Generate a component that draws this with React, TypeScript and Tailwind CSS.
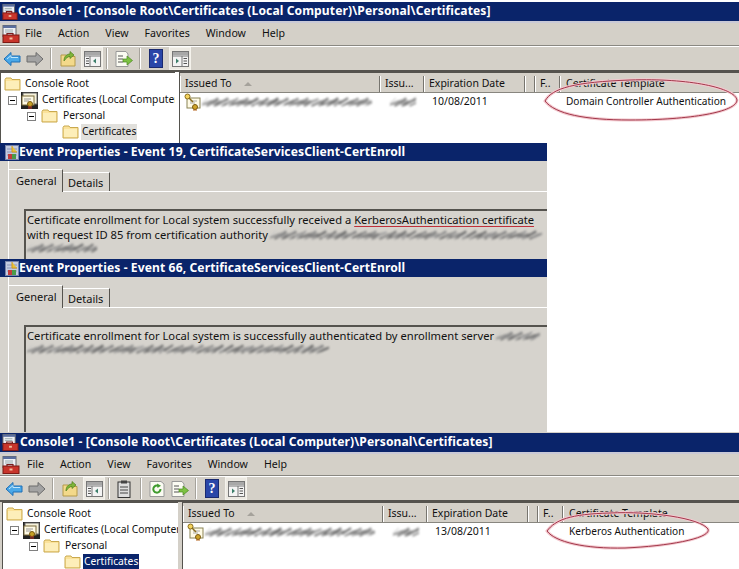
import React from 'react';

const FONT = "font-['Noto_Sans',sans-serif]";

const Folder = () => (
  <svg width="17" height="14" viewBox="0 0 17 14" className="shrink-0">
    <path d="M1 2.5 L2 1 H7 L8 2.5 H16 V13 H1 Z" fill="#fbe29a" stroke="#c9a94f" strokeWidth="1" />
    <path d="M2 4 H15 V12 H2 Z" fill="#fdeeb9" />
  </svg>
);

const CertStore = () => (
  <svg width="17" height="17" viewBox="0 0 17 17" className="shrink-0">
    <rect x="0" y="0" width="17" height="17" fill="#222" />
    <rect x="2" y="1" width="14" height="11" fill="#f7f3dc" stroke="#6b6b6b" />
    <rect x="1" y="4" width="12" height="9" fill="#fffbe6" stroke="#7a6a3a" />
    <path d="M3 7 H10 M3 9 H8" stroke="#999" />
    <circle cx="9" cy="12" r="2.5" fill="#c9a227" stroke="#7a5a10" />
    <path d="M8 14 V17 M10 14 V17" stroke="#c0392b" />
  </svg>
);

const CertRow = () => (
  <svg width="18" height="18" viewBox="0 0 18 18" className="shrink-0">
    <rect x="3" y="5" width="13" height="10" fill="#fffbe6" stroke="#8a8355" />
    <path d="M6 8 H13 M6 10 H11" stroke="#aaa" />
    <circle cx="3.5" cy="3.5" r="2.5" fill="#f4d35e" stroke="#8a6d1a" />
    <path d="M5 5 L9 9" stroke="#8a6d1a" strokeWidth="1.5" />
    <circle cx="11" cy="14" r="2.5" fill="#d0a52a" stroke="#7a5a10" />
    <path d="M10 16 V18 M12 16 V18" stroke="#b5651d" />
  </svg>
);

const MmcIcon = ({ size = 18 }: { size?: number }) => (
  <svg width={size} height={size} viewBox="0 0 18 18" className="shrink-0">
    <rect x="1" y="0.5" width="13" height="11" fill="#eef0f5" stroke="#666" />
    <rect x="1" y="0.5" width="13" height="2.5" fill="#5b6f9e" />
    <path d="M3 5 H11 M3 7 H11" stroke="#9aa" />
    <path d="M5 10 V8.5 H11 V10" fill="none" stroke="#7a1d1d" strokeWidth="1.2" />
    <rect x="1" y="10" width="16" height="7.5" fill="#c8352b" stroke="#7d1a14" />
    <rect x="7.5" y="12.5" width="3" height="2" fill="#f0c0a0" />
  </svg>
);

const SmallEventIcon = () => (
  <svg width="14" height="15" viewBox="0 0 14 15" className="shrink-0">
    <rect x="0.5" y="0.5" width="13" height="14" fill="#c4cbe0" stroke="#7682a8" />
    <path d="M2 4 H12 M2 7 H12 M2 10 H12" stroke="#8a94b8" />
    <path d="M7 1 V7 H12" fill="#e8c33c" stroke="#d19a1e" />
    <path d="M3 9 H7 V14 H3 Z" fill="#c33b3b" />
    <path d="M7 9 H11 V14 H7 Z" fill="#4a9b4a" />
  </svg>
);

const Back = () => (
  <svg width="18" height="16" viewBox="0 0 18 16">
    <path d="M1 8 L8 1.5 V5 H17 V11 H8 V14.5 Z" fill="#4aa8e8" stroke="#1f6fb5" />
    <path d="M4 8 L8 4.5 V6.5 H15" fill="none" stroke="#bfe6fb" />
  </svg>
);

const Forward = () => (
  <svg width="18" height="16" viewBox="0 0 18 16">
    <path d="M17 8 L10 1.5 V5 H1 V11 H10 V14.5 Z" fill="#a3a3a3" stroke="#6c6c6c" />
  </svg>
);

const UpFolder = () => (
  <svg width="16" height="17" viewBox="0 0 16 17">
    <path d="M1 5 H6 L7 6.5 H15 V16 H1 Z" fill="#f3d98a" stroke="#b59a4a" />
    <path d="M4 11 C4 6 7 4 10 4 V1.5 L14 5 L10 8.5 V6.5 C8 6.5 6 8 4 11 Z" fill="#7fb53a" stroke="#4f7f1d" strokeWidth="0.7" />
  </svg>
);

const PaneIcon = ({ flip = false }: { flip?: boolean }) => (
  <svg width="17" height="16" viewBox="0 0 17 16">
    <rect x="0.5" y="0.5" width="16" height="15" fill="#f4f4f4" stroke="#777" />
    <rect x="1" y="1" width="15" height="3" fill="#a8a8a8" />
    {flip ? (
      <>
        <path d="M10 5 V15 M1 5 H16" stroke="#777" />
        <path d="M4 7.5 L7 10 L4 12.5 Z" fill="#3d7f6b" />
        <path d="M11.5 7.5 H15 M11.5 10 H15 M11.5 12.5 H15" stroke="#555" />
      </>
    ) : (
      <>
        <path d="M6 5 V15 M1 5 H16" stroke="#777" />
        <path d="M2 7.5 H5 M2 10 H5 M2 12.5 H5" stroke="#555" />
        <path d="M12 7.5 L9 10 L12 12.5 Z" fill="#3d7f6b" />
      </>
    )}
  </svg>
);

const PaneButton = ({ flip = false }: { flip?: boolean }) => (
  <div className="w-[22px] h-[23px] flex items-center justify-center bg-[#ece9e2] border border-[#f4f2ec]">
    <PaneIcon flip={flip} />
  </div>
);

const ExportList = () => (
  <svg width="18" height="16" viewBox="0 0 18 16">
    <path d="M1 .5 H11 L13 3 V15.5 H1 Z" fill="#fbfbf2" stroke="#999" />
    <path d="M3 5 H8 M3 8 H8 M3 11 H8" stroke="#555" />
    <path d="M8 8 H12 V5 L17.5 9.5 L12 14 V11 H8 Z" fill="#7cc142" stroke="#4b8a1f" strokeWidth="0.7" />
  </svg>
);

const Help = () => (
  <div className="w-[14px] h-[19px] bg-[#2a46a8] border border-[#1a2a70] flex items-center justify-center text-white text-[14px] font-bold leading-none font-['Liberation_Serif',serif]">
    ?
  </div>
);

const Clipboard = () => (
  <svg width="14" height="18" viewBox="0 0 14 18">
    <rect x="1" y="2" width="12" height="15.5" fill="#ddd" stroke="#333" />
    <rect x="4" y="0.5" width="6" height="3" fill="#444" />
    <path d="M3 7 H11 M3 10 H11 M3 13 H11" stroke="#444" />
  </svg>
);

const Refresh = () => (
  <svg width="16" height="16" viewBox="0 0 16 16">
    <path d="M1 .5 H12 L15 3 V15.5 H1 Z" fill="#fbfbf2" stroke="#999" />
    <path d="M11.5 8 A3.6 3.6 0 1 1 9.5 4.8" fill="none" stroke="#3f9b2e" strokeWidth="2" />
    <path d="M8 2.5 L12 4.8 L8.5 7 Z" fill="#3f9b2e" />
  </svg>
);

const Sep = ({ className = '' }: { className?: string }) => (
  <div className={`w-[2px] h-[21px] bg-[#a5a29b] border-r border-white shrink-0 ${className}`} />
);

// the scrubbed-out server names in the screenshot
const Smudge = ({ width, height = 12, className = '' }: { width: number; height?: number; className?: string }) => {
  const strokes = Array.from({ length: Math.floor(width / 2.5) }, (_, i) => i * 2.5 + 1);
  return (
    <svg width={width} height={height} viewBox={`0 0 ${width} ${height}`} className={`blur-[1px] shrink-0 ${className}`}>
      {strokes.map((x, i) => {
        const gap = (i * 7) % 11 === 0;
        return (
          <path
            key={x}
            d={`M${x - 4} ${height - 2 - (i % 3)} L${x + 5 + (i % 4)} ${2 + ((i * 3) % 4)}`}
            stroke={gap ? '#c4c4c4' : (i * 5) % 7 < 3 ? '#6c6c6c' : '#8f8f8f'}
            strokeWidth={gap ? 1 : 1.6}
          />
        );
      })}
    </svg>
  );
};

const Expander = () => (
  <div className="w-[9px] h-[9px] border border-[#808080] bg-white flex items-center justify-center shrink-0">
    <div className="w-[5px] h-px bg-black" />
  </div>
);

const HeaderCell = ({ className, children }: { className: string; children?: React.ReactNode }) => (
  <div className={`h-full flex items-center pl-[5px] border-r border-[#77756f] shadow-[inset_1px_0_0_#fff] shrink-0 overflow-hidden whitespace-nowrap ${className}`}>
    {children}
  </div>
);

interface ConsoleProps {
  date: string;
  template: string;
  selected: boolean;
  second?: boolean;
}

const ConsoleWindow = ({ date, template, selected, second }: ConsoleProps) => {
  const ring = second
    ? 'M547 99 C555 88 570 82 610 81 C650 79 700 86 708 97 C712 106 670 114 625 116 C585 117 555 110 547 99 Z'
    : 'M545 101 C552 88 575 82 630 80 C690 78 735 88 737 100 C737 112 690 120 630 120 C585 120 555 114 545 101 Z';

  return (
    <div className={`relative shrink-0 bg-[#d4d0c8] overflow-hidden ${second ? 'h-[137px] pt-px' : 'h-[143px] pt-[2px] bg-white'}`}>
      {/* Title */}
      <div className="h-[19px] bg-[#0a246a] flex items-center pl-[2px] text-white font-bold text-[12.1px] tracking-[0.1px] whitespace-nowrap">
        <MmcIcon size={second ? 17 : 16} />
        <span className={second ? 'ml-[1px]' : ''}>Console1 - [Console Root\Certificates (Local Computer)\Personal\Certificates]</span>
      </div>
      <div className="h-[2px] bg-[#c9c9d6]" />
      {/* Menu */}
      <div className={`bg-[#d4d0c8] flex items-center border-b border-[#8a8882] text-[10.6px] text-[#111] pl-[2px] ${second ? 'h-[22px]' : 'h-[23px]'}`}>
        <MmcIcon />
        <div className={`flex gap-[16px] ${second ? 'ml-[7px]' : 'ml-[5px]'}`}>
          <span>File</span>
          <span>Action</span>
          <span>View</span>
          <span>Favorites</span>
          <span>Window</span>
          <span>Help</span>
        </div>
      </div>
      {/* Toolbar */}
      <div className={`h-[26px] bg-[#d4d0c8] flex items-center border-t border-white border-b-2 border-b-[#55534e] ${second ? 'pl-[5px]' : 'pl-[3px]'}`}>
        <Back />
        <div className="ml-[5px]"><Forward /></div>
        <Sep className="ml-[6px]" />
        <div className="ml-[8px]"><UpFolder /></div>
        <div className="ml-[5px]"><PaneButton /></div>
        <Sep className="ml-[3px]" />
        {second && (
          <>
            <div className="ml-[7px]"><Clipboard /></div>
            <Sep className="ml-[9px]" />
            <div className="ml-[7px]"><Refresh /></div>
          </>
        )}
        <div className={second ? 'ml-[6px]' : 'ml-[7px]'}><ExportList /></div>
        <Sep className="ml-[6px]" />
        <div className="ml-[8px]"><Help /></div>
        <div className="ml-[6px]"><PaneButton flip /></div>
      </div>
      {/* Panes */}
      <div className="flex h-[80px] text-[10.5px] text-[#111]">
        <div className={`bg-white border-l border-t border-[#55534e] shrink-0 pl-[3px] pt-[3px] text-[10.3px] overflow-hidden whitespace-nowrap ${second ? 'w-[176px] ml-[2px]' : 'w-[175px]'}`}>
          <div className="h-[16px] flex items-center gap-[4px]"><Folder /><span>Console Root</span></div>
          <div className="h-[16px] flex items-center gap-[4px] pl-[4px]"><Expander /><CertStore /><span>Certificates (Local Computer)</span></div>
          <div className="h-[16px] flex items-center gap-[5px] pl-[23px]"><Expander /><Folder /><span>Personal</span></div>
          <div className="h-[16px] flex items-center gap-[2px] pl-[58px]">
            <Folder />
            <span className={`px-[1px] ${selected ? 'bg-[#0a246a] text-white' : 'bg-[#e1e0dc]'}`}>Certificates</span>
          </div>
        </div>
        <div className="flex-1 min-w-0 ml-[4px] bg-white border-l border-t border-[#55534e] overflow-hidden">
          <div className="h-[20px] pt-[3px] bg-[#d4d0c8] border-b border-[#88867f] flex items-center">
            <HeaderCell className="w-[200px] gap-[12px]">
              <span>Issued To</span>
              <span className="w-0 h-0 border-x-[4px] border-x-transparent border-b-[4px] border-b-[#a5a29b]" />
            </HeaderCell>
            <HeaderCell className="w-[44px]">Issu...</HeaderCell>
            <HeaderCell className="w-[101px]">Expiration Date</HeaderCell>
            <HeaderCell className="w-[10px]" />
            <HeaderCell className="w-[25px]">F..</HeaderCell>
            <div className="flex-1 pl-[6px] whitespace-nowrap shadow-[inset_1px_0_0_#fff] h-full flex items-center">Certificate Template</div>
          </div>
          <div className="flex items-center h-[17px] whitespace-nowrap">
            <div className="w-[200px] flex items-center shrink-0 pl-[4px]">
              <CertRow />
              <Smudge width={170} />
            </div>
            <div className="w-[44px] shrink-0 pl-[10px]"><Smudge width={26} /></div>
            <div className="w-[101px] shrink-0 pl-[8px]">{date}</div>
            <div className="w-[35px] shrink-0" />
            <div className="pl-[6px] text-[10.1px]">{template}</div>
          </div>
        </div>
      </div>
      {/* Red ring drawn over the screenshot */}
      <svg className="absolute left-0 top-0 pointer-events-none" width="739" height="143" viewBox="0 0 739 143" fill="none">
        <path d={ring} stroke="#f3c9cf" strokeWidth="3" />
        <path d={ring} stroke="#a2374a" strokeWidth="1" />
      </svg>
    </div>
  );
};

interface EventProps {
  title: string;
  className: string;
  children: React.ReactNode;
}

const EventDialog = ({ title, className, children }: EventProps) => (
  <div className={`relative w-[547px] shrink-0 bg-[#d6d3cd] overflow-hidden ${className}`}>
    <div className="h-[18px] bg-[#0a246a] flex items-center pl-[5px] text-white font-bold text-[12.1px] tracking-[0.1px] whitespace-nowrap">
      <SmallEventIcon />
      <span>{title}</span>
    </div>
    <div className="h-[9px] border-l border-white ml-[8px]" />
    <div className="ml-[8px] flex items-end h-[22px] text-[11px] text-[#111] border-b border-white relative">
      <div className="w-[55px] h-[23px] -mb-px bg-[#d6d3cd] border-t border-l border-white border-r border-r-[#55534e] pl-[7px] pt-[3px]">General</div>
      <div className="w-[47px] h-[19px] border-t border-white border-r border-r-[#55534e] pl-[5px] pt-[2px]">Details</div>
    </div>
    <div className="ml-[8px] pl-[15px] border-l border-white pt-[17px] h-full">
      <div className="h-full border-l-2 border-t-2 border-[#55534e] pl-px pt-px text-[11.2px] text-[#111] leading-[15px]">
        {children}
      </div>
    </div>
  </div>
);

export default function App() {
  return (
    <div className={`w-[739px] h-[569px] bg-white overflow-hidden flex flex-col ${FONT}`}>
      <ConsoleWindow date="10/08/2011" template="Domain Controller Authentication" selected={false} />
      <EventDialog title="Event Properties - Event 19, CertificateServicesClient-CertEnroll" className="h-[116px]">
        <div className="whitespace-nowrap">
          Certificate enrollment for Local system successfully received a{' '}
          <span className="underline decoration-[#c0303a] underline-offset-2">KerberosAuthentication certificate</span>
        </div>
        <div className="flex items-center whitespace-nowrap">
          with request ID 85 from certification authority
          <Smudge width={272} className="ml-[2px]" />
        </div>
        <Smudge width={70} />
      </EventDialog>
      <EventDialog title="Event Properties - Event 66, CertificateServicesClient-CertEnroll" className="h-[173px]">
        <div className="flex items-center whitespace-nowrap">
          Certificate enrollment for Local system is successfully authenticated by enrollment server
          <Smudge width={44} className="ml-[2px]" />
        </div>
        <Smudge width={302} />
      </EventDialog>
      <ConsoleWindow second date="13/08/2011" template="Kerberos Authentication" selected />
    </div>
  );
}
